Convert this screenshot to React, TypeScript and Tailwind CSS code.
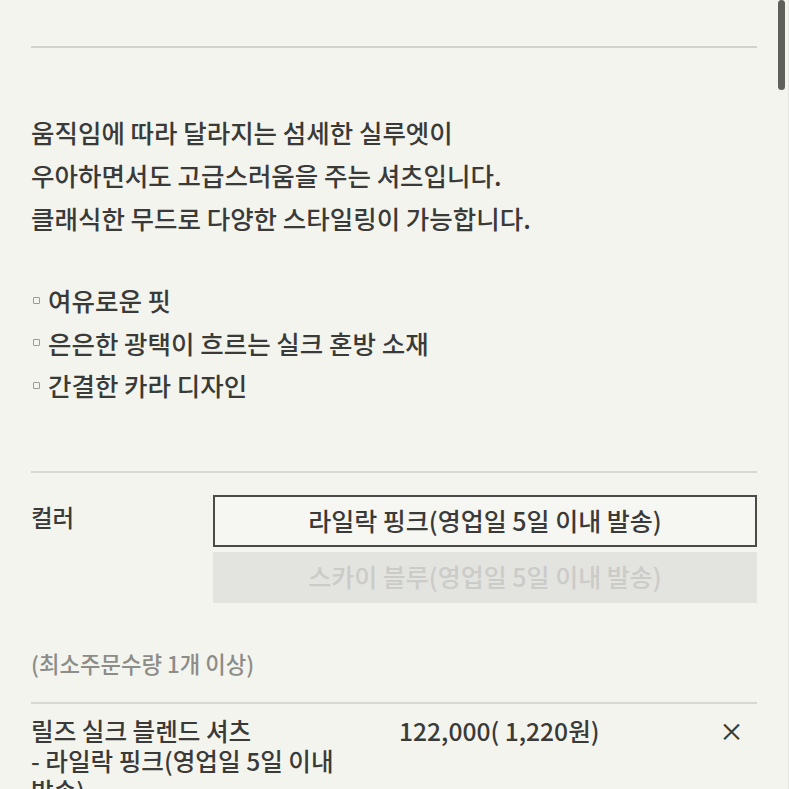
export default function App() {
  const font = { fontFamily: '"Noto Sans CJK KR", "Noto Sans", sans-serif' };
  return (
    <div className="relative h-[789px] w-[789px] overflow-hidden bg-[#f4f4ee] text-[#3a3a38]" style={font}>
      {/* scrollbar thumb */}
      <div className="absolute right-[4px] top-0 h-[90px] w-[7px] rounded-full bg-[#5f5f5c]" />
      <div className="absolute right-0 top-0 h-full w-px bg-[#e6e6e0]" />

      <div className="pl-[31px] pr-[32px] pt-[46px]">
        <div className="h-[2px] bg-[#d2d2cd]" />

        <div className="mt-[62px] text-[25.5px] font-medium leading-[43px]">
          <p>움직임에 따라 달라지는 섬세한 실루엣이</p>
          <p>우아하면서도 고급스러움을 주는 셔츠입니다.</p>
          <p>클래식한 무드로 다양한 스타일링이 가능합니다.</p>
        </div>

        <ul className="mt-[40px] text-[25.5px] font-medium leading-[42.5px]">
          {["여유로운 핏", "은은한 광택이 흐르는 실크 혼방 소재", "간결한 카라 디자인"].map((t) => (
            <li key={t} className="flex items-center">
              <span className="ml-[2px] mr-[8px] inline-block h-[7px] w-[7px] rounded-[1px] border border-[#9a9a96]" />
              <span>{t}</span>
            </li>
          ))}
        </ul>

        <div className="mt-[64px] h-[2px] bg-[#d8d8d3]" />

        <div className="mt-[22px] flex">
          <div className="w-[182px] pt-[7px] text-[23.5px] font-medium leading-[30px]">컬러</div>
          <div className="flex flex-1 flex-col gap-[5px]">
            <div className="flex h-[52px] items-center justify-center border-2 border-[#4a4a48] bg-[#f6f6f2] text-[25px] font-medium">
              라일락 핑크(영업일 5일 이내 발송)
            </div>
            <div className="flex h-[51px] items-center justify-center bg-[#e3e3e0] text-[25px] font-medium text-[#cbcbc8]">
              스카이 블루(영업일 5일 이내 발송)
            </div>
          </div>
        </div>

        <p className="mt-[45px] text-[22.3px] font-medium leading-[30px] text-[#8c8c89]">(최소주문수량 1개 이상)</p>

        <div className="mt-[24px] h-[2px] bg-[#d8d8d3]" />

        <div className="mt-[11px] flex text-[24.6px] font-medium leading-[30px]">
          <div className="w-[340px] break-keep">
            <p>릴즈 실크 블렌드 셔츠</p>
            <p>- 라일락 핑크(영업일 5일 이내 발송)</p>
          </div>
          <div className="ml-[28px] flex-1">122,000( 1,220원)</div>
          <div className="mr-[13px] text-[25px]">×</div>
        </div>
      </div>
    </div>
  );
}
